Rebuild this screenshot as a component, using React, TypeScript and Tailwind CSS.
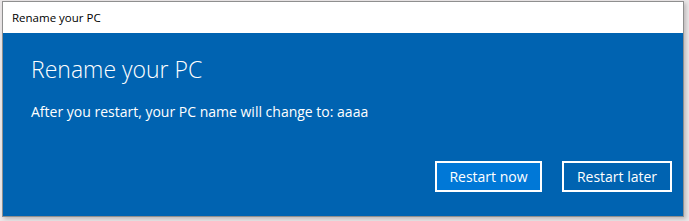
export default function App() {
  return (
    <div className="w-[689px] h-[221px] bg-[#ebe7e8] overflow-hidden" style={{ fontFamily: '"Open Sans", "Noto Sans", "Liberation Sans", sans-serif' }}>
      <div className="ml-[2px] mt-[1px] w-[682px] border border-[#8f8f8f] flex flex-col shadow-[2px_2px_4px_rgba(0,0,0,0.2)]">
        <div className="h-[31px] bg-white flex items-center pl-[9px] text-[11.5px] text-black">Rename your PC</div>
        <div className="h-[183px] bg-[#0063b1] flex flex-col pl-[28px] pr-[11px]">
          <div className="mt-[20px] text-[23px] font-light text-white leading-[32px]">Rename your PC</div>
          <div className="mt-[17px] text-[14px] text-white leading-[20px]">After you restart, your PC name will change to: aaaa</div>
          <div className="mt-auto mb-[24px] flex justify-end gap-[20px]">
            <button className="w-[107px] h-[31px] bg-[#0078d7] border-2 border-white text-white text-[14px]">Restart now</button>
            <button className="w-[110px] h-[31px] bg-[#0063b1] border-2 border-white text-white text-[14px]">Restart later</button>
          </div>
        </div>
      </div>
    </div>
  );
}
